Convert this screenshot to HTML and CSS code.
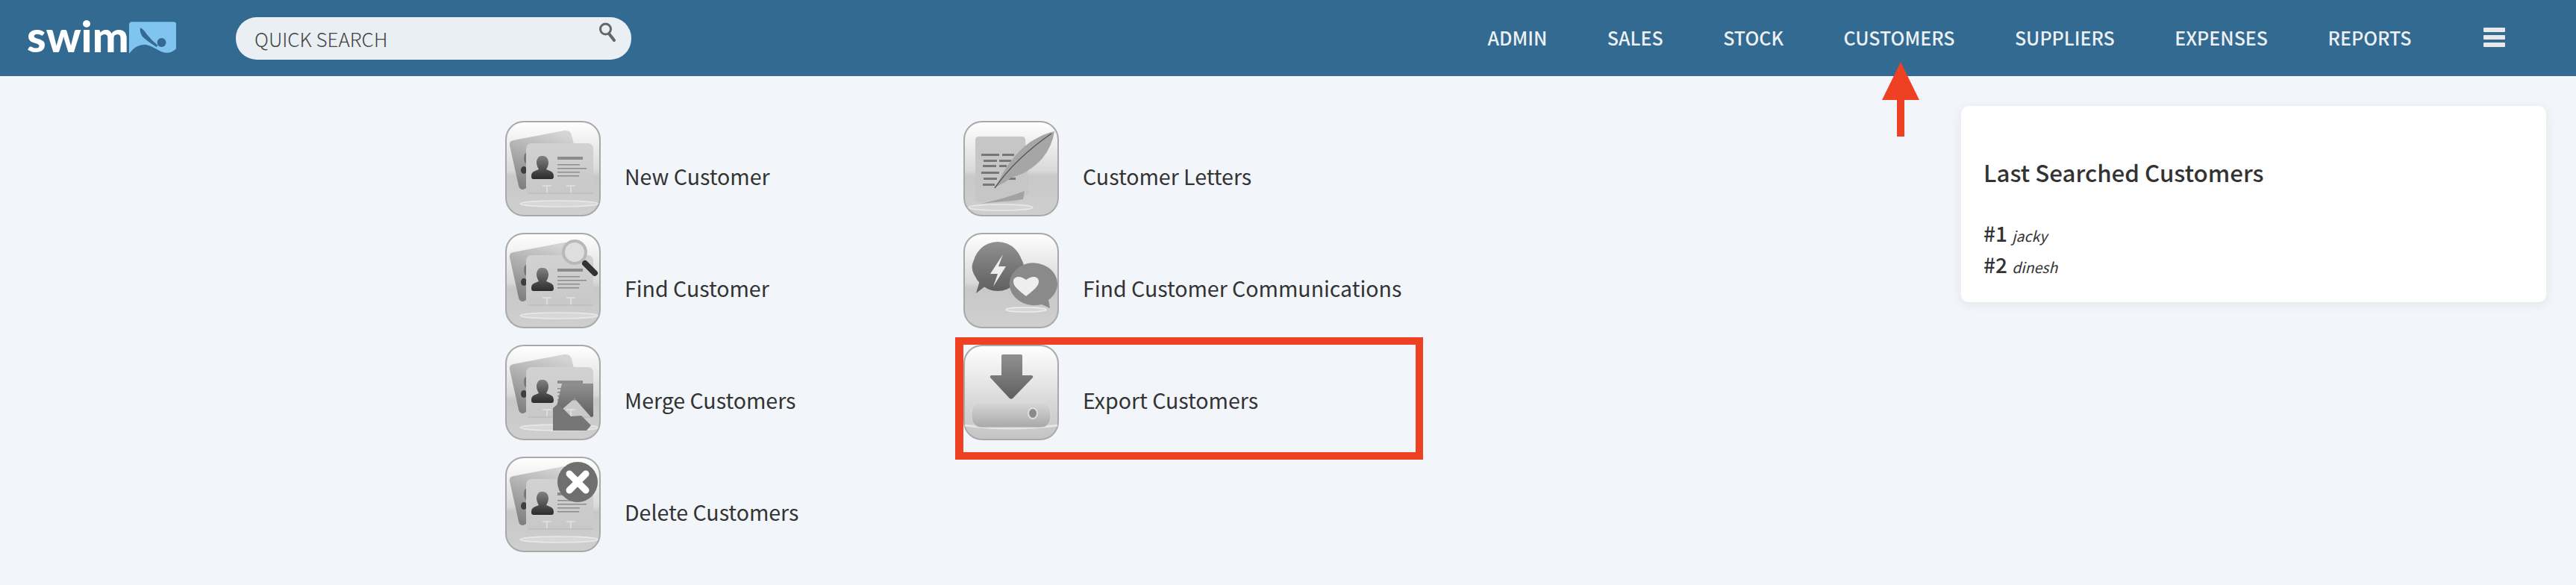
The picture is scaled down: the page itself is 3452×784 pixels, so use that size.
FILE: index.html
```html
<!DOCTYPE html>
<html lang="en">
<head>
<meta charset="utf-8">
<title>Swim - Customers</title>
<link rel="stylesheet" href="styles.css">
</head>
<body>
<svg class="defs" width="0" height="0" aria-hidden="true">
  <defs>
    <linearGradient id="tile" x1="0" y1="0" x2="0" y2="1">
      <stop offset="0" stop-color="#fff"/><stop offset=".52" stop-color="#d9d9d9"/><stop offset=".58" stop-color="#c8c8c8"/><stop offset="1" stop-color="#cfcfcf"/>
    </linearGradient>
    <linearGradient id="tile2" x1="0" y1="0" x2="0" y2="1">
      <stop offset="0" stop-color="#fff"/><stop offset=".7" stop-color="#d2d2d2"/><stop offset="1" stop-color="#c4c4c4"/>
    </linearGradient>
    <linearGradient id="back" x1=".6" y1="0" x2=".2" y2="1">
      <stop offset="0" stop-color="#d4d4d4"/><stop offset=".6" stop-color="#a2a2a2"/><stop offset="1" stop-color="#7d7d7d"/>
    </linearGradient>
    <linearGradient id="front" x1="0" y1="0" x2="0" y2="1">
      <stop offset="0" stop-color="#d2d2d2"/><stop offset="1" stop-color="#c8c8c8"/>
    </linearGradient>
    <linearGradient id="bust" x1="0" y1="0" x2="0" y2="1">
      <stop offset="0" stop-color="#808080"/><stop offset="1" stop-color="#2c2c2c"/>
    </linearGradient>
    <linearGradient id="dark" x1="0" y1="0" x2="0" y2="1">
      <stop offset="0" stop-color="#909090"/><stop offset="1" stop-color="#606060"/>
    </linearGradient>
    <linearGradient id="drive" x1="0" y1="0" x2="0" y2="1">
      <stop offset="0" stop-color="#d8d8d8"/><stop offset="1" stop-color="#a8a8a8"/>
    </linearGradient>
    <symbol id="tile-frame" viewBox="0 0 128 128">
      <rect x="1" y="1" width="126" height="126" rx="24" fill="url(#tile)" stroke="#a9a9a9" stroke-width="2"/>
    </symbol>
    <symbol id="cards" viewBox="0 0 128 128">
      <rect x="1" y="1" width="126" height="126" rx="24" fill="url(#tile)" stroke="#a9a9a9" stroke-width="2"/>
      <ellipse cx="72" cy="111" rx="52" ry="4" fill="#d8d8d8" stroke="#e8e8e8" stroke-width="1.5"/>
      <path d="M6 33q-1-6 5-7l68-13q8-1 10 6l10 40-75 33q-5 0-6-5z" fill="url(#back)"/>
      <ellipse cx="25" cy="66" rx="4" ry="5" fill="#3e3e3e"/>
      <ellipse cx="28" cy="50" rx="3" ry="7" fill="#777"/>
      <rect x="28" y="30" width="90" height="67" rx="7" fill="url(#front)"/>
      <path d="M51 47c4 0 7 4 7 9 0 4-2 7-3 9 5 2 10 3 10 9 0 3-1 4-3 4H38c-2 0-3-1-3-4 0-6 5-7 10-9-1-2-3-5-3-9 0-5 3-9 6-9z" fill="url(#bust)"/>
      <g fill="#8c8c8c">
        <rect x="70" y="48" width="34" height="4"/>
        <rect x="70" y="58" width="30" height="1.500"/>
        <rect x="70" y="63" width="39" height="1.500"/>
        <rect x="70" y="68" width="30" height="1.500"/>
        <rect x="70" y="73" width="29" height="1.500"/>
      </g>
      <path d="M50 87h12M82 87h12M56 87v10M88 87v10" fill="none" stroke="#e2e2e2" stroke-width="1.5"/>
      <path d="M30 97h88" stroke="#b6b6b6" stroke-width="1"/>
    </symbol>
  </defs>
</svg>

<header class="topbar">
  <a class="logo">
    <span class="logo-word">swim</span>
    <svg class="logo-flag" viewBox="0 0 64 43" aria-hidden="true">
      <path d="M0 4q0-4 4-4h56q4 0 4 4v32q-6 6-13 6-6 0-14-5t-14-6Q10 30 0 43z" fill="#80c4f0"/>
      <path d="M15 8q4 1 9 9 7 9 15 15l-2 2Q24 26 18 20 14 14 15 8z" fill="#326a92"/>
      <circle cx="44" cy="28" r="6" fill="#326a92"/>
    </svg>
  </a>
  <div class="search">
    <span class="search-label">QUICK SEARCH</span>
    <svg class="search-icon" viewBox="0 0 24 26" aria-hidden="true">
      <circle cx="9.500" cy="9" r="7" fill="none" stroke="#666" stroke-width="3"/>
      <path d="M14 15l7 9" stroke="#666" stroke-width="4" stroke-linecap="round"/>
    </svg>
  </div>
  <nav class="nav">
    <a>ADMIN</a><a>SALES</a><a>STOCK</a><a>CUSTOMERS</a><a>SUPPLIERS</a><a>EXPENSES</a><a>REPORTS</a>
    <span class="burger"><i></i><i></i><i></i></span>
  </nav>
</header>

<main class="content">
  <ul class="menu-col">
    <li class="menu-item">
      <svg class="tile" viewBox="0 0 128 128"><use href="#cards"/></svg>
      <span>New Customer</span>
    </li>
    <li class="menu-item">
      <svg class="tile" viewBox="0 0 128 128"><use href="#cards"/>
        <circle cx="93" cy="26" r="15" fill="#dedede" stroke="#b8b8b8" stroke-width="4"/>
        <path d="M107 41l13 13" stroke="#333" stroke-width="8" stroke-linecap="round"/>
      </svg>
      <span>Find Customer</span>
    </li>
    <li class="menu-item">
      <svg class="tile" viewBox="0 0 128 128"><use href="#cards"/>
        <path d="M76 52h42v44l-3 1-22-25-22 19-3-4z" fill="url(#dark)"/>
        <path d="M64 85l7-6 17 17 14-1 13 13-6 7H64z" fill="#767676"/>
      </svg>
      <span>Merge Customers</span>
    </li>
    <li class="menu-item">
      <svg class="tile" viewBox="0 0 128 128"><use href="#cards"/>
        <circle cx="97" cy="34" r="27" fill="#6f6f6f"/>
        <path d="M86 23l22 22M108 23L86 45" stroke="#fff" stroke-width="9" stroke-linecap="round"/>
      </svg>
      <span>Delete Customers</span>
    </li>
  </ul>
  <ul class="menu-col">
    <li class="menu-item">
      <svg class="tile" viewBox="0 0 128 128">
        <use href="#tile-frame"/>
        <ellipse cx="50" cy="116" rx="43" ry="4" fill="#d4d4d4" stroke="#e8e8e8" stroke-width="1.500"/>
        <path d="M16 26q0-5 5-5h57q5 0 5 5l5 72-18 11H21q-5 0-5-5z" fill="#c6c6c6"/>
        <g fill="#777">
          <rect x="24" y="44" width="24" height="3"/><rect x="52" y="44" width="16" height="3"/>
          <rect x="27" y="52" width="18" height="3"/><rect x="48" y="52" width="16" height="3"/>
          <rect x="26" y="59" width="18" height="3"/><rect x="48" y="59" width="10" height="3"/>
          <rect x="24" y="68" width="24" height="3"/>
          <rect x="27" y="76" width="18" height="3"/><rect x="50" y="76" width="20" height="3"/>
          <rect x="26" y="84" width="16" height="3"/>
        </g>
        <path d="M44 88Q60 50 90 28q20-12 32-14-3 20-16 36-18 20-42 26-6 6-20 12z" fill="#a6a6a6"/>
        <path d="M42 90Q70 50 118 17" fill="none" stroke="#555" stroke-width="1.500"/>
        <path d="M23 111q30-6 59-17l-2 11-14 2-14 1z" fill="#a2a2a2"/>
      </svg>
      <span>Customer Letters</span>
    </li>
    <li class="menu-item">
      <svg class="tile" viewBox="0 0 128 128">
        <use href="#tile-frame"/>
        <ellipse cx="84" cy="103" rx="27" ry="3" fill="#d6d6d6" stroke="#eee" stroke-width="1.500"/>
        <path d="M46 21a34 25 0 0 1 26 42L30 71l-13 10 5-17A34 25 0 0 1 46 21z" fill="url(#dark)"/>
        <circle cx="46" cy="45" r="33" fill="url(#dark)"/>
        <path d="M53 29L36 55h10l-6 17 17-27H47z" fill="#eee"/>
        <path d="M86 41a33 28 0 0 1 28 49l2 11-11-5A33 28 0 1 1 86 41z" fill="#8a8a8a"/>
        <path d="M84 85C70 74 67 70 67 65c0-6 8-9 17-2 9-7 17-4 17 2 0 5-3 9-17 20z" fill="#eee"/>
      </svg>
      <span>Find Customer Communications</span>
    </li>
    <li class="menu-item">
      <svg class="tile" viewBox="0 0 128 128">
        <rect x="1" y="1" width="126" height="126" rx="24" fill="url(#tile2)" stroke="#a9a9a9" stroke-width="2"/>
        <path d="M2 108q62 8 124 0" fill="none" stroke="#e6e6e6" stroke-width="3"/>
        <path d="M51 15q0-2 2-2h24q2 0 2 2v26h12q3 0 2 3L66 72q-2 1-4 0L36 44q-1-3 2-3h13z" fill="url(#dark)"/>
        <rect x="11" y="77" width="106" height="34" rx="13" fill="url(#drive)" stroke="#dcdcdc"/>
        <ellipse cx="93" cy="92" rx="6" ry="7" fill="#8a8a8a" stroke="#ddd" stroke-width="2"/>
      </svg>
      <span>Export Customers</span>
    </li>
  </ul>
  <aside class="recent">
    <h2>Last Searched Customers</h2>
    <p><b>#1</b> <em>jacky</em></p>
    <p><b>#2</b> <em>dinesh</em></p>
  </aside>
</main>

<div class="callout-box"></div>
<svg class="callout-arrow" viewBox="0 0 50 100" aria-hidden="true">
  <path d="M25 0L50 51H30V100H20V51H0z" fill="#ee4023"/>
</svg>
</body>
</html>
```
FILE: styles.css
```css
* { box-sizing: border-box; }
html, body { margin: 0; height: 100%; }
body {
  background: #f2f5f9;
  color: #333;
  font-family: "Noto Sans CJK SC", "Source Sans Pro", "Open Sans", sans-serif;
  overflow: hidden;
  position: relative;
}
.defs { position: absolute; }

.topbar {
  display: flex;
  align-items: center;
  height: 102px;
  background: #326a92;
  padding: 0 95px 0 36px;
}
.logo { display: flex; align-items: flex-start; justify-content: space-between; width: 200px; height: 60px; margin-right: 80px; }
.logo-word {
  font-family: Lato, sans-serif;
  font-weight: 900;
  font-size: 58px;
  line-height: 60px;
  color: #fff;
  margin-top: -3px;
}
.logo-flag { width: 64px; height: 43px; margin-top: 8px; }

.search {
  display: flex;
  align-items: center;
  justify-content: space-between;
  width: 530px;
  height: 57px;
  border-radius: 28px;
  background: #e9eff3;
  padding: 0 20px 0 25px;
}
.search-label { font-size: 26px; font-weight: 300; color: #444; line-height: 51px; }
.search-icon { width: 24px; height: 26px; margin-top: -16px; }

.nav {
  display: flex;
  align-items: center;
  gap: 80.5px;
  margin-left: auto;
  color: #eef1f4;
  font-size: 25px;
  font-weight: 500;
  line-height: 40px;
  margin-top: -3px;
}
.burger { display: flex; flex-direction: column; gap: 4px; width: 29px; margin-left: 16px; }
.burger i { display: block; height: 6px; border-radius: 1px; background: #e9e9e9; }

.content {
  display: flex;
  align-items: flex-start;
  padding: 40px 40px 0 677px;
}
.menu-col {
  list-style: none;
  width: 614px;
  margin: 20px 0 0;
  padding: 0;
}
.menu-item {
  display: flex;
  align-items: center;
  gap: 32px;
  height: 128px;
  margin-bottom: 22px;
  font-size: 28.5px;
  white-space: nowrap;
}
.menu-item span { position: relative; top: 9px; }
.tile { width: 128px; height: 128px; flex: none; filter: blur(.4px); }

.recent {
  width: 784px;
  height: 263px;
  margin-left: auto;
  background: #fff;
  border-radius: 10px;
  box-shadow: 0 3px 14px rgba(40, 60, 90, .08);
  padding: 66px 30px 0;
}
.recent h2 { margin: 0 0 37px; font-size: 31.3px; font-weight: 500; line-height: 46px; }
.recent p { margin: 0; font-size: 28px; line-height: 42px; }
.recent b { font-weight: 500; }
.recent em { font-size: 19.5px; font-weight: 400; line-height: 1; }

.callout-box {
  position: absolute;
  left: 1280px;
  top: 452px;
  width: 627px;
  height: 164px;
  border: 10px solid #ee4023;
  border-left-width: 11px;
}
.callout-arrow {
  position: absolute;
  left: 2522px;
  top: 83px;
  width: 50px;
  height: 100px;
}
```
